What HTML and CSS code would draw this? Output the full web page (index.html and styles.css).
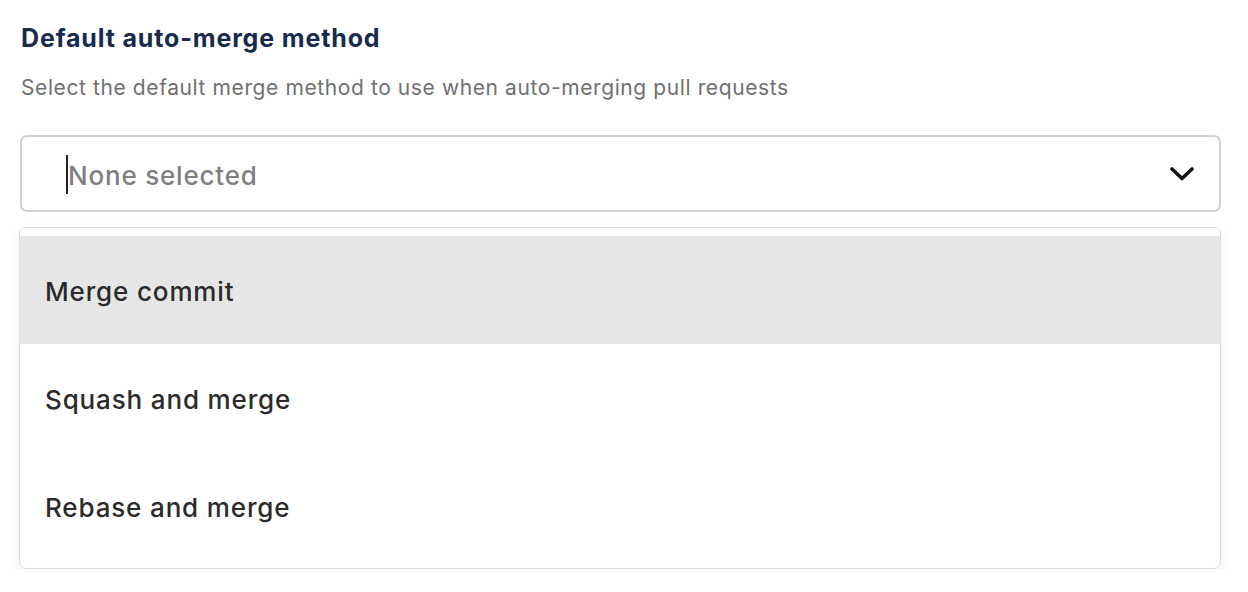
FILE: index.html
```html
<!DOCTYPE html>
<html lang="en">
<head>
<meta charset="utf-8">
<title>Default auto-merge method</title>
<link rel="stylesheet" href="styles.css">
</head>
<body>
<div class="field">
  <h2 class="title">Default auto-merge method</h2>
  <p class="desc">Select the default merge method to use when auto-merging pull requests</p>
  <div class="select">
    <div class="value"><span class="caret"></span><span class="placeholder">None selected</span></div>
    <svg class="chevron" width="26" height="16" viewBox="0 0 26 16"><path d="M3 3 L13 12.5 L23 3" fill="none" stroke="#111" stroke-width="3.6" stroke-linecap="round" stroke-linejoin="round"/></svg>
  </div>
  <ul class="menu">
    <li class="option active">Merge commit</li>
    <li class="option">Squash and merge</li>
    <li class="option">Rebase and merge</li>
  </ul>
</div>
</body>
</html>
```
FILE: styles.css
```css
* { box-sizing: border-box; }
html, body { margin: 0; padding: 0; background: #fff; }
body { font-family: Inter, "Noto Sans", sans-serif; }
.field { padding: 20px 27px 0 20px; }
.title {
  margin: 0 0 0 1px;
  font-size: 25px;
  line-height: 36px;
  font-weight: 700;
  color: #172b4d;
  letter-spacing: 0.85px;
}
.desc {
  margin: 17px 0 0 1px;
  font-size: 21px;
  line-height: 30px;
  color: #707070;
  letter-spacing: 0.6px;
}
.select {
  margin-top: 32px;
  height: 77px;
  border: 2px solid #d0d0d0;
  border-radius: 7px;
  display: flex;
  align-items: center;
  padding: 0 24px 0 44px;
}
.value { flex: 1; display: flex; align-items: center; padding-top: 3px; }
.caret { width: 2px; height: 39px; background: #222; margin-top: -2px; }
.placeholder { font-size: 26px; color: #808080; font-weight: 500; letter-spacing: 0.8px; }
.chevron { display: block; margin-top: 1px; }
.menu {
  list-style: none;
  margin: 15px 0 0 -1px;
  width: 1202px;
  padding: 8px 0;
  border: 1px solid #dcdcdc;
  border-radius: 7px;
  box-shadow: 0 4px 12px rgba(0,0,0,0.06);
  background: #fff;
}
.option {
  height: 108px;
  display: flex;
  align-items: center;
  padding: 2px 0 0 25px;
  font-size: 26px;
  font-weight: 500;
  color: #2b2b2b;
  letter-spacing: 0.85px;
}
.option.active { background: #e6e6e6; }
```
